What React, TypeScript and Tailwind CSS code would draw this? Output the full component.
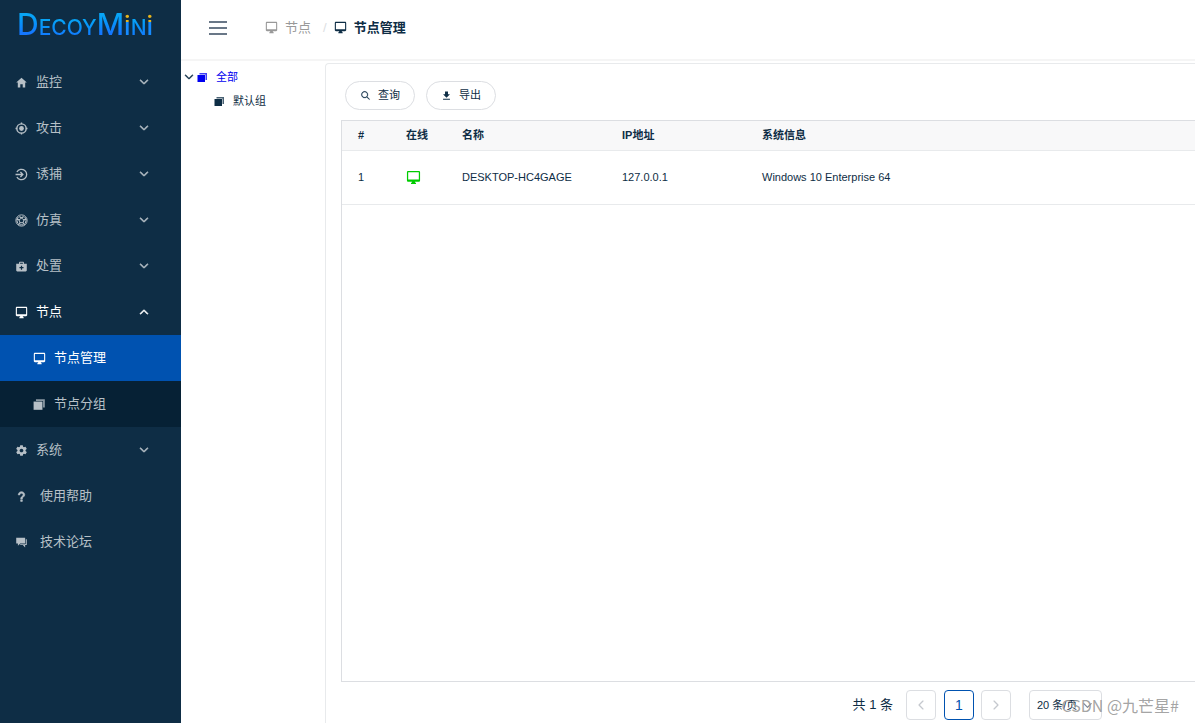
import React from "react";
import {
  IoIosArrowDown,
  IoIosArrowUp,
  IoIosSearch,
  IoMdChatboxes,
  IoMdDesktop,
  IoMdDownload,
  IoMdHelp,
  IoMdHome,
  IoMdMedkit,
  IoMdSettings,
} from "react-icons/io";

// Circle with an arrow coming in from the left
const TrapIcon: React.FC = () => (
  <svg viewBox="0 0 24 24" className="size-[13px]" fill="none" stroke="currentColor" strokeWidth="2.4">
    <path d="M3.5 7.5A9.6 9.6 0 1 1 3.5 16.5" />
    <path d="M1 12h13M10 7.5l4.5 4.5-4.5 4.5" />
  </svg>
);

// Ring with four ticks and a solid centre
const TargetIcon: React.FC = () => (
  <svg viewBox="0 0 24 24" className="size-[13px]" fill="none" stroke="currentColor" strokeWidth="2.6">
    <circle cx="12" cy="12" r="8.6" />
    <circle cx="12" cy="12" r="4.4" fill="currentColor" stroke="none" />
    <path d="M12 1v3M12 20v3M1 12h3M20 12h3" />
  </svg>
);

// Outer ring around a segmented ball
const BallIcon: React.FC = () => (
  <svg viewBox="0 0 24 24" className="size-[13px]" fill="none" stroke="currentColor" strokeWidth="1.8">
    <circle cx="12" cy="12" r="10.4" />
    <path d="M12 7.5l4.5 3.3-1.7 5.2H9.2l-1.7-5.2z" />
    <path d="M12 7.5L8 4.5M12 7.5l4-3M16.5 10.8l4.500-1.300M14.8 16l3 4M9.2 16l-3 4M7.5 10.8L3 9.5" strokeWidth="2.4" />
    <path d="M6 5.5l-2.500 6 1.500 5.500M18 5.500l2.500 6-1.500 5.500M8.500 20h7" />
  </svg>
);

// Solid page in front, the one behind shows at the top and right
const CopyIcon: React.FC<{ className: string }> = ({ className }) => (
  <svg viewBox="0 0 22 22" className={className} fill="currentColor">
    <path d="M1 6h15v14H1z" />
    <path d="M5 2h15v14h-3V5H5z" opacity="0.75" />
  </svg>
);

const menu = [
  { label: "监控", icon: <IoMdHome /> },
  { label: "攻击", icon: <TargetIcon /> },
  { label: "诱捕", icon: <TrapIcon /> },
  { label: "仿真", icon: <BallIcon /> },
  { label: "处置", icon: <IoMdMedkit /> },
];

const links = [
  { label: "使用帮助", icon: <IoMdHelp strokeWidth={24} stroke="currentColor" /> },
  { label: "技术论坛", icon: <IoMdChatboxes /> },
];

type MenuItemProps = { label: string; icon: React.ReactNode; open?: boolean };

const MenuItem: React.FC<MenuItemProps> = ({ label, icon, open = false }) => {
  const Arrow = open ? IoIosArrowUp : IoIosArrowDown;
  return (
    <button
      aria-expanded={open}
      className={`flex h-[46px] w-full items-center pb-px pl-[15px] pr-[31px] ${open ? "text-white" : "text-[#b7c0c7]"}`}
    >
      <span className="mr-2 pt-px">{icon}</span>
      {label}
      <Arrow className="ml-auto text-xs" strokeWidth={24} stroke="currentColor" />
    </button>
  );
};

const Logo: React.FC = () => (
  <a
    href="#"
    aria-label="DecoyMini"
    className="flex h-[59px] items-baseline pl-[17px] pt-[9px] font-[Inter] text-[21px] font-medium leading-[30px] text-transparent *:bg-clip-text"
  >
    <span className="bg-linear-to-b from-[#08a5f5] from-20% to-[#1577ff] to-80% text-3xl leading-[30px]">D</span>
    <span className="bg-linear-to-b from-[#08a5f5] from-20% to-[#1577ff] to-80%">ECOY</span>
    <span className="bg-linear-to-b from-[#08a5f5] from-20% to-[#1577ff] to-80% text-3xl leading-[30px]">M</span>
    <span className="bg-linear-to-b from-[#e8b51c] from-35% to-[#168bff] to-36% text-[26px] leading-[30px]">i</span>
    <span className="bg-linear-to-b from-[#08a5f5] from-20% to-[#1577ff] to-80%">N</span>
    <span className="bg-linear-to-b from-[#e8b51c] from-35% to-[#168bff] to-36% text-[26px] leading-[30px]">i</span>
  </a>
);

const Sidebar: React.FC = () => (
  <aside className="w-[181px] shrink-0 bg-[#0e2d45] text-[13px]">
    <Logo />
    <nav>
      {menu.map((item) => (
        <MenuItem key={item.label} label={item.label} icon={item.icon} />
      ))}
      <MenuItem label="节点" icon={<IoMdDesktop />} open />
      <a href="#" className="flex h-[46px] items-center bg-[#0052b0] pb-px pl-[33px] text-white">
        <span className="mr-2 pt-px"><IoMdDesktop /></span>
        节点管理
      </a>
      <a href="#" className="flex h-[46px] items-center bg-[#062135] pb-px pl-[33px] text-[#b7c0c7]">
        <span className="mr-2 pt-px"><CopyIcon className="size-[13px]" /></span>
        节点分组
      </a>
      <MenuItem label="系统" icon={<IoMdSettings />} />
      {links.map((link) => (
        <a key={link.label} href="#" className="flex h-[46px] items-center pb-px pl-[15px] text-[#b7c0c7]">
          <span className="mr-3 pt-px">{link.icon}</span>
          {link.label}
        </a>
      ))}
    </nav>
  </aside>
);

const Header: React.FC = () => (
  <header className="flex h-[61px] shrink-0 items-center border-b-2 border-[#f5f5f5] pb-1 pl-7">
    <button aria-label="菜单" className="mr-[38px] flex w-[18px] flex-col gap-1">
      <span className="h-0.5 bg-[#697787]" />
      <span className="h-0.5 bg-[#697787]" />
      <span className="h-0.5 bg-[#697787]" />
    </button>
    <nav className="flex items-center text-[13px]">
      <a href="#" className="flex items-center gap-[7px] text-[#999]">
        <IoMdDesktop />
        节点
      </a>
      <span className="ml-3 mr-[7px] text-[#dcdee2]">/</span>
      <span className="flex items-center gap-[7px] font-bold">
        <IoMdDesktop />
        节点管理
      </span>
    </nav>
  </header>
);

const GroupTree: React.FC = () => (
  <ul className="w-36 shrink-0 pl-0.5 pt-1 text-[11px] leading-6">
    <li>
      <div className="flex items-center text-[#0000f0]">
        <IoIosArrowDown className="mr-0.5 text-xs text-[#0e2d45]" strokeWidth={16} stroke="currentColor" />
        <CopyIcon className="mr-2 size-[11px]" />
        全部
      </div>
      <ul>
        <li className="flex items-center pl-[31px]">
          <CopyIcon className="mr-2 size-[11px]" />
          默认组
        </li>
      </ul>
    </li>
  </ul>
);

const NodeTable: React.FC = () => (
  <div className="flex-1 border-y border-l border-[#dcdee2]">
    <table className="w-full table-fixed text-left text-[11px]">
      <colgroup>
        <col className="w-12" />
        <col className="w-14" />
        <col className="w-40" />
        <col className="w-[140px]" />
        <col />
      </colgroup>
      <thead>
        <tr className="h-[29px] border-b border-[#e8eaec] bg-[#f8f8f9]">
          <th className="pl-4">#</th>
          <th className="pl-4">在线</th>
          <th className="pl-4">名称</th>
          <th className="pl-4">IP地址</th>
          <th className="pl-4">系统信息</th>
        </tr>
      </thead>
      <tbody>
        <tr className="h-[54px] border-b border-[#e8eaec]">
          <td className="pl-4">1</td>
          <td className="pl-4">
            <IoMdDesktop className="text-[15px] text-[#0c0]" />
          </td>
          <td className="pl-4">DESKTOP-HC4GAGE</td>
          <td className="pl-4">127.0.0.1</td>
          <td className="pl-4">Windows 10 Enterprise 64</td>
        </tr>
      </tbody>
    </table>
  </div>
);

const Pagination: React.FC = () => (
  <div className="flex items-center justify-end pb-[3px] pr-[93px] pt-2 text-[13px]">
    <span className="mr-[13px]">共 1 条</span>
    <button aria-label="上一页" className="mr-2 flex size-[30px] items-center justify-center rounded border border-[#dcdee2] text-sm text-[#c5c8ce]">
      <IoIosArrowDown className="rotate-90" />
    </button>
    <button className="mr-[7px] size-[30px] rounded border border-[#0052b0] text-sm text-[#0052b0]">1</button>
    <button aria-label="下一页" className="mr-[18px] flex size-[30px] items-center justify-center rounded border border-[#dcdee2] text-sm text-[#c5c8ce]">
      <IoIosArrowDown className="-rotate-90" />
    </button>
    <div className="relative flex items-center">
      <select aria-label="每页条数" className="h-[30px] w-[73px] appearance-none rounded border border-[#dcdee2] pl-[7px] text-[11px]">
        <option>20 条/页</option>
      </select>
      <IoIosArrowDown className="pointer-events-none absolute right-2 text-[#808695]" />
    </div>
  </div>
);

const App: React.FC = () => {
  return (
    <div className="relative flex h-screen overflow-hidden bg-white font-['Liberation_Sans','Noto_Sans_CJK_SC',sans-serif] text-[#0e2d45]">
      <Sidebar />
      <div className="flex min-w-0 flex-1 flex-col">
        <Header />
        <div className="flex min-h-0 flex-1">
          <GroupTree />
          {/* Node list panel */}
          <main className="mt-0.5 flex min-w-0 flex-1 flex-col rounded-tl border-l border-t border-[#e8eaec] pl-[15px]">
            <div className="flex gap-[11px] pb-2.5 pl-1 pt-[17px] text-[11px]">
              <button className="flex h-[29px] items-center gap-[7px] rounded-full border border-[#dcdee2] px-3.5">
                <IoIosSearch strokeWidth={12} stroke="currentColor" />
                查询
              </button>
              <button className="flex h-[29px] items-center gap-[7px] rounded-full border border-[#dcdee2] px-3.5">
                <IoMdDownload />
                导出
              </button>
            </div>
            <NodeTable />
            <Pagination />
          </main>
        </div>
      </div>
      {/* Watermark */}
      <span className="pointer-events-none absolute bottom-1.5 right-4 font-['Noto_Sans_CJK_SC',sans-serif] text-base leading-6 text-[#999]/90">
        CSDN @九芒星#
      </span>
    </div>
  );
};

export default App;
